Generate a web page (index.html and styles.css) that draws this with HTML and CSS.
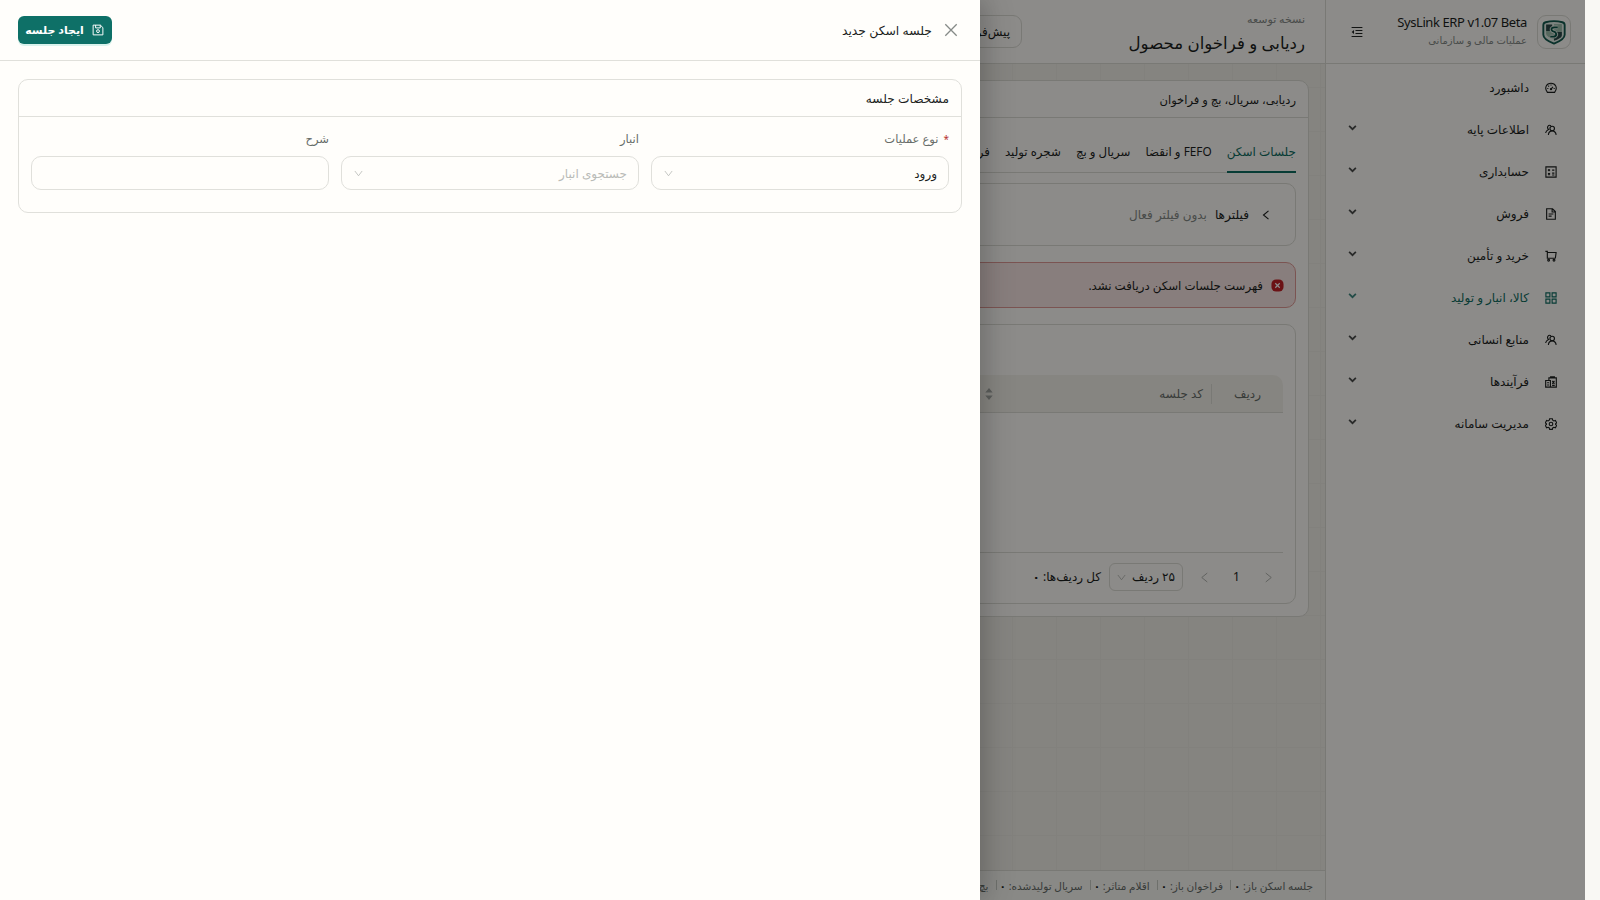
FILE: index.html
```html
<!DOCTYPE html>
<html lang="fa" dir="rtl">
<head>
    <meta charset="UTF-8">
    <title>SysLink ERP</title>
    <link rel="stylesheet" href="styles.css">
</head>
<body>
    <svg class="sprite" aria-hidden="true">
        <symbol id="i-dash" viewBox="0 0 16 16"><path d="M3.200 13.800C-1.500 8 2 1.600 8 1.600s9.500 6.400 4.800 12.200zM8 9.500l2.600-3M8 3.200v1.500M3 8.600h1.500M11.500 8.600H13M4.400 5l1 1"/><circle cx="8" cy="9.600" r=".8"/></symbol>
        <symbol id="i-team" viewBox="0 0 16 16"><circle cx="9.600" cy="6" r="3"/><path d="M4.500 14.600c.3-3.300 2.300-5.400 5.100-5.400s4.800 2.100 5.300 5.400M8 2.300C4.500.3 1.800 4.500 4.700 7.300 2.400 8.400 1.200 9.800.8 12"/></symbol>
        <symbol id="i-account" viewBox="0 0 16 16"><path d="M1.200 1.200h13.600v13.600H1.200zM3.800 5.500h3M5.300 4v3M9.500 5.500h3M4.100 9.500l2.500 2.500M6.600 9.500L4.100 12M9.500 9.500h3M9.500 12h3"/></symbol>
        <symbol id="i-file" viewBox="0 0 16 16"><path d="M2.200 1h7.800l3.800 3.800V15H2.200zM9.500 1v4.300h4.300M4.800 8h6.400M4.800 10.800h4"/></symbol>
        <symbol id="i-cart" viewBox="0 0 16 16"><path d="M.5 1.800h2.600v9.200h11M3.100 3.300h11.700L13.800 11"/><circle cx="4.800" cy="13.600" r="1.200"/><circle cx="12" cy="13.600" r="1.200"/></symbol>
        <symbol id="i-grid" viewBox="0 0 16 16"><path d="M1.200 1.200h5.300v5.300H1.200zM9.500 1.200h5.300v5.300H9.500zM1.200 9.500h5.300v5.300H1.200zM9.500 9.500h5.300v5.300H9.500z"/></symbol>
        <symbol id="i-recon" viewBox="0 0 16 16"><path d="M5.200 6V2.500h9.900v12.300H.9V6h6.300v8.800M7.500 2.500V1h5v1.500M9.800 6.500l2.800 4M12.600 6.500l-2.800 4M2.800 9h2.600M2.800 12h2.600M9.500 12.500h3.500"/></symbol>
        <symbol id="i-gear" viewBox="0 0 16 16"><circle cx="8" cy="8" r="2.400"/><path d="M6.200 1h3.600l.5 2 1.500.9 2-.6 1.800 3.100-1.500 1.400v.8l1.500 1.300-1.800 3.100-2-.6-1.500.9-.5 1.900H6.200l-.5-1.900-1.500-.9-2 .6L.4 9.900l1.500-1.300v-.8L.4 6.400l1.800-3.100 2 .6L5.700 3z"/></symbol>
        <symbol id="i-fold" viewBox="0 0 16 16"><path d="M.8 2h14.400M6 6h9.200M6 10h9.200M.8 14h14.400"/><path class="solid" d="M4 5.400v5.200L.8 8z"/></symbol>
        <symbol id="i-save" viewBox="0 0 16 16"><path d="M1.500 1.500h9.700l3.300 3.300v9.700h-13zM4.800 1.500v3.700h6.200V1.500"/><circle cx="8" cy="9.500" r="1.900"/></symbol>
        <symbol id="i-down" viewBox="0 0 16 16"><path d="M1.500 3.500L8 12l6.500-8.500"/></symbol>
        <symbol id="i-chevron" viewBox="0 0 16 16"><path d="M2 5l6 6 6-6"/></symbol>
        <symbol id="i-left" viewBox="0 0 16 16"><path d="M12 1.500L4 8l8 6.500"/></symbol>
        <symbol id="i-right" viewBox="0 0 16 16"><path d="M4 1.500L12 8l-8 6.500"/></symbol>
        <symbol id="i-close" viewBox="0 0 16 16"><path d="M2.300 2.300l11.400 11.400M13.700 2.300L2.300 13.700"/></symbol>
    </svg>

    <div class="app">
        <aside class="sidebar">
            <div class="brand">
                <div class="logo">
                    <svg viewBox="0 0 28 28">
                        <path class="shield" d="M5 3.500Q14 1 23 3.500q2.500.7 2.500 3V17c0 4.500-5 7-11.500 9.500C7.500 24 2.500 21.500 2.500 17V6.500q0-2.300 2.500-3z"/>
                        <path class="light" d="M14 5.500h8.500V14H14z"/>
                        <path class="light" d="M5.500 13H14v9l-6-3q-2.500-1.500-2.500-3z"/>
                        <path class="shade" d="M5.500 6H12v7H5.500zM14 14h8.500v3.500c0 2.500-4 4.400-8.500 6z"/>
                        <path class="mark-bg" d="M18 9h-3.500q-4 .3-3 3 .6 1.200 2.500 1.700t2.500 2.600q-.3 2.700-3 2.700H10"/>
                        <path class="mark-line" d="M18 9h-3.500q-4 .3-3 3 .6 1.200 2.500 1.700t2.500 2.600q-.3 2.700-3 2.700H10"/>
                    </svg>
                </div>
                <div class="brand-text">
                    <strong><bdi>SysLink ERP v1.07 Beta</bdi></strong>
                    <span>عملیات مالی و سازمانی</span>
                </div>
                <svg class="icon fold"><use href="#i-fold"/></svg>
            </div>
            <nav class="menu">
                <a><svg class="icon"><use href="#i-dash"/></svg><span>داشبورد</span></a>
                <a><svg class="icon"><use href="#i-team"/></svg><span>اطلاعات پایه</span><svg class="arrow"><use href="#i-chevron"/></svg></a>
                <a><svg class="icon"><use href="#i-account"/></svg><span>حسابداری</span><svg class="arrow"><use href="#i-chevron"/></svg></a>
                <a><svg class="icon"><use href="#i-file"/></svg><span>فروش</span><svg class="arrow"><use href="#i-chevron"/></svg></a>
                <a><svg class="icon"><use href="#i-cart"/></svg><span>خرید و تأمین</span><svg class="arrow"><use href="#i-chevron"/></svg></a>
                <a class="active"><svg class="icon"><use href="#i-grid"/></svg><span>کالا، انبار و تولید</span><svg class="arrow"><use href="#i-chevron"/></svg></a>
                <a><svg class="icon"><use href="#i-team"/></svg><span>منابع انسانی</span><svg class="arrow"><use href="#i-chevron"/></svg></a>
                <a><svg class="icon"><use href="#i-recon"/></svg><span>فرآیندها</span><svg class="arrow"><use href="#i-chevron"/></svg></a>
                <a><svg class="icon"><use href="#i-gear"/></svg><span>مدیریت سامانه</span><svg class="arrow"><use href="#i-chevron"/></svg></a>
            </nav>
        </aside>

        <main class="main">
            <header class="topbar">
                <div class="page-title">
                    <small>نسخه توسعه</small>
                    <h1>ردیابی و فراخوان محصول</h1>
                </div>
                <div class="preset">پیش‌فرض</div>
            </header>

            <div class="content">
                <section class="card">
                    <div class="card-head">ردیابی، سریال، بچ و فراخوان</div>
                    <div class="card-body">
                        <div class="tabs">
                            <span class="tab current">جلسات اسکن</span>
                            <span class="tab">FEFO و انقضا</span>
                            <span class="tab">سریال و بچ</span>
                            <span class="tab">شجره تولید</span>
                            <span class="tab">فراخوان</span>
                        </div>
                        <div class="filters">
                            <svg class="icon"><use href="#i-left"/></svg>
                            <b>فیلترها</b>
                            <span>بدون فیلتر فعال</span>
                        </div>
                        <div class="alert">
                            <svg viewBox="0 0 14 14"><rect class="alert-bg" x=".5" y=".5" width="13" height="13" rx="5"/><path d="M4.600 4.600l4.800 4.800M9.400 4.600L4.600 9.400"/></svg>
                            <span>فهرست جلسات اسکن دریافت نشد.</span>
                        </div>
                        <div class="table-card">
                            <div class="table-head">
                                <span class="th-row">ردیف</span>
                                <span class="th-code">کد جلسه</span>
                                <svg class="sorter" viewBox="0 0 8 12"><path d="M4 0l3.700 4.500H.3zM4 12l3.700-4.500H.3z"/></svg>
                            </div>
                            <div class="table-empty"></div>
                            <div class="pager">
                                <svg class="step"><use href="#i-right"/></svg>
                                <span class="page-no">1</span>
                                <svg class="step"><use href="#i-left"/></svg>
                                <span class="page-size">۲۵ ردیف<svg><use href="#i-down"/></svg></span>
                                <span class="total">کل ردیف‌ها: <b>۰</b></span>
                            </div>
                        </div>
                    </div>
                </section>
            </div>

            <footer class="status">
                <span>جلسه اسکن باز: <b>۰</b></span>
                <span>فراخوان باز: <b>۰</b></span>
                <span>اقلام متاثر: <b>۰</b></span>
                <span>سریال تولیدشده: <b>۰</b></span>
                <span>بچ فعال: <b>۰</b></span>
            </footer>
        </main>
    </div>

    <div class="mask"></div>

    <div class="drawer">
        <header class="drawer-head">
            <svg class="close"><use href="#i-close"/></svg>
            <span class="drawer-title">جلسه اسکن جدید</span>
            <button class="save"><svg><use href="#i-save"/></svg><span>ایجاد جلسه</span></button>
        </header>
        <div class="drawer-body">
            <section class="form-card">
                <div class="form-head">مشخصات جلسه</div>
                <div class="form-grid">
                    <div class="field">
                        <label><i>*</i>نوع عملیات</label>
                        <div class="control"><b>ورود</b><svg><use href="#i-down"/></svg></div>
                    </div>
                    <div class="field">
                        <label>انبار</label>
                        <div class="control"><span class="placeholder">جستجوی انبار</span><svg><use href="#i-down"/></svg></div>
                    </div>
                    <div class="field">
                        <label>شرح</label>
                        <div class="control"></div>
                    </div>
                </div>
            </section>
        </div>
    </div>
</body>
</html>
```
FILE: styles.css
```css
* {
    box-sizing: border-box;
}
body {
    margin: 0;
    height: 100vh;
    overflow: hidden;
    background: #f9f8f4;
    color: #1c1f1e;
    font-family: "Noto Sans", "DejaVu Sans", sans-serif;
    font-size: 12px;
    line-height: 20px;
}
svg {
    display: block;
    flex: none;
    fill: none;
    stroke: currentColor;
    stroke-width: 1.3;
}
.sprite {
    position: absolute;
    width: 0;
    height: 0;
}
.solid {
    fill: currentColor;
    stroke: none;
}
.icon {
    width: 12px;
    height: 12px;
}
.app {
    display: flex;
    height: 100vh;
    margin-right: 15px;
}

/* sidebar */
.sidebar {
    flex: none;
    width: 260px;
    background: #fffdf9;
    border-left: 1px solid #dcdcd5;
}
.brand {
    display: flex;
    align-items: center;
    height: 64px;
    padding: 0 14px 0 25px;
    border-bottom: 1px solid #dcdcd5;
}
.logo {
    width: 34px;
    height: 34px;
    padding: 3px;
    border: 1px solid #dcdcd5;
    border-radius: 9px;
}
.logo svg {
    width: 26px;
    height: 26px;
}
.shield {
    fill: #e4eee7;
    stroke: #155c50;
    stroke-width: 2;
}
.light {
    fill: #9dbdab;
    stroke: none;
}
.shade {
    fill: #2c4a4a;
    stroke: none;
}
.mark-bg {
    stroke: #e4eee7;
    stroke-width: 4;
}
.mark-line {
    stroke: #0c5548;
    stroke-width: 2;
}
.brand-text {
    flex: 1;
    margin: 0 10px 2px 0;
    line-height: 18px;
}
.brand-text strong {
    display: block;
    font-size: 13px;
    font-weight: 400;
    letter-spacing: -0.4px;
}
.brand-text span {
    display: block;
    color: #858a87;
    font-size: 10px;
}
.menu {
    padding-top: 3px;
}
.menu a {
    display: flex;
    align-items: center;
    height: 42px;
    padding: 0 28px 0 22px;
}
.menu .icon {
    stroke-width: 1.5;
}
.menu span {
    flex: 1;
    margin-right: 16px;
}
.menu .active {
    color: #0e6d62;
}
.menu .arrow {
    width: 9px;
    height: 9px;
    margin-bottom: 5px;
    opacity: 0.8;
    stroke-width: 3;
}

/* page */
.main {
    flex: 1;
    display: flex;
    flex-direction: column;
    min-width: 0;
    background-color: #f3f1ea;
    background-image: linear-gradient(90deg, transparent 43px, #edebe4 43px), linear-gradient(transparent 43px, #edebe4 43px);
    background-position: 1px 0;
    background-size: 44px 44px;
}
.topbar {
    display: flex;
    height: 64px;
    padding: 10px 20px 0 0;
    background: #fffdf9;
    border-bottom: 1px solid #dcdcd5;
}
.page-title {
    flex: none;
    width: 283px;
}
.page-title small {
    display: block;
    color: #858a87;
    font-size: 11px;
    line-height: 17px;
}
.page-title h1 {
    margin: 0;
    font-size: 16.6px;
    font-weight: 400;
    line-height: 31px;
}
.preset {
    width: 340px;
    height: 33px;
    margin-top: 5px;
    padding: 6px 11px;
    border: 1px solid #dcdcd5;
    border-radius: 9px;
}
.content {
    flex: 1;
    padding: 16px;
}
.card {
    height: 537px;
    background: #fffdf9;
    border: 1px solid #dcdcd5;
    border-radius: 10px;
}
.card-head {
    height: 37px;
    padding: 9px 12px 0;
    border-bottom: 1px solid #dcdcd5;
    font-size: 11.5px;
}
.card-body {
    padding: 12px;
}
.tabs {
    display: flex;
    gap: 15px;
    height: 43px;
    border-bottom: 1px solid #dcdcd5;
}
.tab {
    height: 43px;
    padding-top: 11px;
    font-size: 11.8px;
    white-space: nowrap;
}
.current {
    padding-top: 12px;
    color: #0e6d62;
    border-bottom: 2px solid #0e6d62;
    font-size: 12px;
}
.filters {
    display: flex;
    align-items: center;
    gap: 8px;
    height: 63px;
    margin-top: 10px;
    padding-right: 24px;
    border: 1px solid #dcdcd5;
    border-radius: 10px;
}
.filters .icon {
    width: 10px;
    height: 10px;
    margin-left: 4px;
    stroke-width: 1.8;
}
.filters b {
    font-size: 12.2px;
    font-weight: 500;
}
.filters span {
    color: #858a87;
}
.alert {
    display: flex;
    align-items: center;
    gap: 8px;
    height: 46px;
    margin-top: 16px;
    padding-right: 11px;
    background: #f8e6e3;
    border: 1px solid #e19a96;
    border-radius: 10px;
    font-size: 11.8px;
}
.alert svg {
    width: 13px;
    height: 13px;
    stroke: #fff;
}
.alert-bg {
    fill: #c42127;
    stroke: none;
}
.table-card {
    height: 280px;
    margin-top: 16px;
    padding: 50px 12px 0;
    border: 1px solid #dcdcd5;
    border-radius: 10px;
}
.table-head {
    display: flex;
    align-items: center;
    height: 38px;
    background: #f5f3ec;
    border-bottom: 1px solid #dcdcd5;
    border-radius: 0 10px 0 0;
    color: #676d69;
}
.th-row {
    width: 72px;
    text-align: center;
    border-left: 1px solid #dcdcd5;
}
.th-code {
    width: 218px;
    padding-right: 8px;
}
.sorter {
    width: 8px;
    height: 12px;
    fill: #a8aba7;
    stroke: none;
}
.table-empty {
    height: 140px;
    border-bottom: 1px solid #dcdcd5;
}
.pager {
    display: flex;
    align-items: center;
    height: 48px;
    padding-right: 9px;
}
.step {
    width: 11px;
    height: 11px;
    color: #a8aba7;
}
.page-no {
    width: 53px;
    text-align: center;
}
.page-size {
    display: flex;
    align-items: center;
    justify-content: space-between;
    width: 74px;
    height: 28px;
    margin: 0 16px 0 8px;
    padding: 0 7px;
    border: 1px solid #dcdcd5;
    border-radius: 6px;
}
.page-size svg {
    width: 9px;
    height: 9px;
    color: #a8aba7;
}
.status {
    display: flex;
    height: 30px;
    padding: 5px 12px 0 0;
    background: #fafaf5;
    border-top: 1px solid #dcdcd5;
    color: #676d69;
    font-size: 10.5px;
    white-space: nowrap;
}
.status span + span::before {
    content: "";
    display: inline-block;
    width: 1px;
    height: 10px;
    margin: 0 3px 0 7px;
    background: #c9ccc5;
}
.status b {
    color: #1c1f1e;
}

.mask {
    position: absolute;
    inset: 0 15px 0 0;
    background: rgba(0, 0, 0, 0.45);
}

/* drawer */
.drawer {
    position: absolute;
    top: 0;
    left: 0;
    width: 980px;
    height: 100vh;
    background: #fffefb;
    box-shadow: 6px 0 16px rgba(0, 0, 0, 0.08), 9px 0 28px rgba(0, 0, 0, 0.12);
}
.drawer-head {
    display: flex;
    align-items: center;
    height: 61px;
    padding: 0 21px 0 18px;
    border-bottom: 1px solid #e0e0db;
}
.close {
    width: 16px;
    height: 16px;
    color: #858a87;
}
.drawer-title {
    flex: 1;
    margin-right: 11px;
    padding-top: 2px;
    font-size: 12.4px;
}
.save {
    display: flex;
    align-items: center;
    justify-content: center;
    gap: 8px;
    width: 94px;
    height: 28px;
    padding: 0 1px 0 0;
    background: #0e7067;
    border: 0;
    border-radius: 6px;
    box-shadow: 0 2px 0 #d9f2ec;
    color: #fff;
    font: inherit;
    font-size: 11px;
    font-weight: 600;
}
.save svg {
    width: 12px;
    height: 12px;
}
.drawer-body {
    padding: 18px;
}
.form-card {
    height: 134px;
    border: 1px solid #e0e0db;
    border-radius: 10px;
}
.form-head {
    height: 37px;
    padding: 9px 12px;
    border-bottom: 1px solid #e0e0db;
    font-size: 12.2px;
}
.form-grid {
    display: grid;
    grid-template-columns: repeat(3, 1fr);
    gap: 12px;
    padding: 12px;
}
.field label {
    display: block;
    height: 27px;
    color: #676d69;
    font-size: 11.5px;
}
.field i {
    margin-left: 5px;
    color: #b5322f;
    font-size: 10px;
    font-style: normal;
}
.control {
    display: flex;
    align-items: center;
    justify-content: space-between;
    height: 34px;
    padding: 0 11px;
    border: 1px solid #e0e0db;
    border-radius: 10px;
}
.control b,
.control span {
    padding-top: 2px;
    font-weight: 500;
}
.control svg {
    width: 9px;
    height: 9px;
    margin-left: 1px;
    color: #b0b3af;
}
.control .placeholder {
    color: #b9bbb7;
    font-weight: 400;
}
```
